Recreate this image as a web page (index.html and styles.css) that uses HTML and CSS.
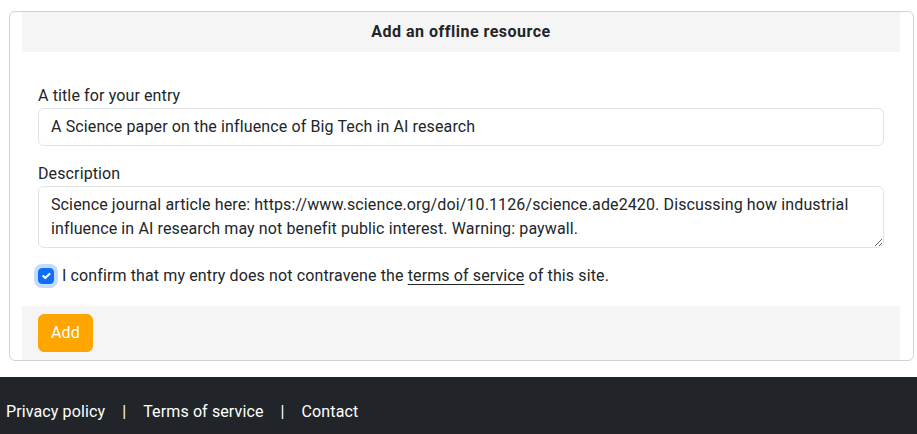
FILE: index.html
```html
<!DOCTYPE html>
<html lang="en">
<head>
<meta charset="utf-8">
<title>Add an offline resource</title>
<link rel="stylesheet" href="styles.css">
</head>
<body>
<main class="page">
  <form class="card">
    <div class="card-header">Add an offline resource</div>
    <div class="card-body">
      <div class="field">
        <label class="form-label" for="title">A title for your entry</label>
        <input class="form-control" id="title" type="text" value="A Science paper on the influence of Big Tech in AI research">
      </div>
      <div class="field">
        <label class="form-label" for="desc">Description</label>
        <textarea class="form-control textarea" id="desc" rows="2">Science journal article here: https://www.science.org/doi/10.1126/science.ade2420. Discussing how industrial influence in AI research may not benefit public interest. Warning: paywall.</textarea>
      </div>
      <div class="form-check">
        <input class="check-input" type="checkbox" id="tos" checked>
        <label class="check-label" for="tos">I confirm that my entry does not contravene the <a href="#" class="link">terms of service</a> of this site.</label>
      </div>
    </div>
    <div class="card-footer">
      <button class="btn" type="button">Add</button>
    </div>
  </form>
</main>
<footer class="site-footer">
  <a href="#" class="foot-link">Privacy policy</a>
  <span class="sep">|</span>
  <a href="#" class="foot-link">Terms of service</a>
  <span class="sep">|</span>
  <a href="#" class="foot-link">Contact</a>
</footer>
</body>
</html>
```

FILE: styles.css
```css
* { box-sizing: border-box; }
html, body { margin: 0; padding: 0; }
body {
  font-family: "Roboto", "Liberation Sans", sans-serif;
  font-size: 16px;
  line-height: 24px;
  letter-spacing: 0.12px;
  color: #212529;
  background: #fff;
}
.page {
  padding: 11px 3px 16px 9px;
}
.card {
  display: flex;
  flex-direction: column;
  border: 1px solid #d2d2d2;
  border-radius: 6px;
  padding: 0 13px 0 12px;
  margin: 0;
}
.card-header {
  background: #f5f5f5;
  height: 40px;
  display: flex;
  align-items: center;
  justify-content: center;
  font-weight: 700;
  letter-spacing: 0.5px;
}
.card-body {
  padding: 32px 16px 18px;
  display: flex;
  flex-direction: column;
  gap: 16px;
}
.field { display: flex; flex-direction: column; }
.form-label { display: block; }
.form-control {
  display: block;
  width: 100%;
  font: inherit;
  letter-spacing: inherit;
  color: #212529;
  border: 1px solid #dee2e6;
  border-radius: 6px;
  padding: 6px 12px;
  line-height: 24px;
  background: #fff;
  margin: 0;
}
.textarea {
  height: 62px;
  resize: vertical;
}
.form-check {
  display: flex;
  align-items: center;
  height: 24px;
}
.check-input {
  appearance: none;
  -webkit-appearance: none;
  width: 16px;
  height: 16px;
  margin: 0 8px 0 0;
  border-radius: 4px;
  background-color: #0d6efd;
  border: 1px solid #0d6efd;
  box-shadow: 0 0 0 4px rgba(13, 110, 253, 0.25);
  background-image: url("data:image/svg+xml,%3csvg xmlns='http://www.w3.org/2000/svg' viewBox='0 0 20 20'%3e%3cpath fill='none' stroke='%23fff' stroke-linecap='round' stroke-linejoin='round' stroke-width='3' d='m6 10 3 3 6-6'/%3e%3c/svg%3e");
  background-size: 100% 100%;
  flex: none;
}
.link { color: #212529; text-decoration: underline; text-underline-offset: 3px; }
.card-footer {
  background: #f5f5f5;
  padding: 8px 16px;
  display: flex;
}
.btn {
  font: inherit;
  letter-spacing: inherit;
  line-height: 24px;
  height: 38px;
  padding: 0 12px;
  color: #fff;
  background: #ffa500;
  border: 1px solid #ffa500;
  border-radius: 6px;
}
.site-footer {
  background: #212529;
  height: 57px;
  display: flex;
  align-items: center;
  gap: 17px;
  padding: 12px 6px 0;
}
.foot-link { color: #fff; text-decoration: none; }
.sep { color: #fff; }
```
